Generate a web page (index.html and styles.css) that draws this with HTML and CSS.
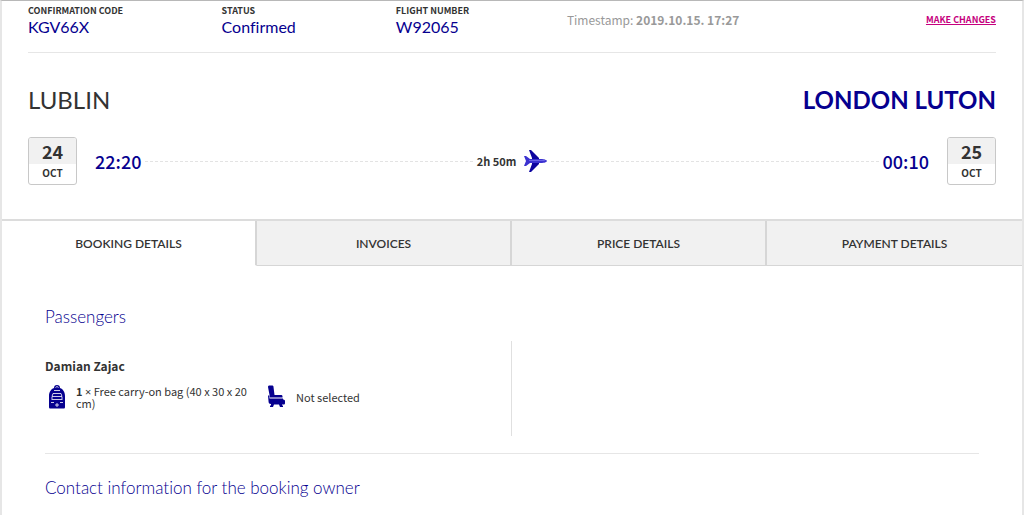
FILE: index.html
```
<!DOCTYPE html>
<html lang="en">
<head>
<meta charset="utf-8">
<title>Booking KGV66X</title>
<link rel="stylesheet" href="styles.css">
</head>
<body>
<main class="sheet">
  <section class="flight">
    <header class="summary">
      <div class="fact"><span class="fact-label">Confirmation code</span><span class="fact-value">KGV66X</span></div>
      <div class="fact"><span class="fact-label">Status</span><span class="fact-value">Confirmed</span></div>
      <div class="fact"><span class="fact-label">Flight number</span><span class="fact-value">W92065</span></div>
      <div class="stamp">Timestamp: <strong>2019.10.15. 17:27</strong></div>
      <a class="change" href="#">MAKE CHANGES</a>
    </header>
    <div class="cities">
      <span class="origin">LUBLIN</span>
      <span class="destination">LONDON LUTON</span>
    </div>
    <div class="route">
      <div class="date"><span class="day">24</span><span class="month">OCT</span></div>
      <span class="time">22:20</span>
      <span class="track"></span>
      <span class="duration">2h 50m</span>
      <svg class="plane" viewBox="0 0 23 24" aria-hidden="true">
        <path fill="#0d04a0" d="M5 1h2l8 8v6l-8 8H5l3-8V9z"/>
        <path fill="#3b32d0" d="M0 7h2l4 3h11c3 0 6 1 6 2s-3 2-6 2H6l-4 3H0l2-5z"/>
        <path fill="#6a63e8" d="M5 11h15l2 1H5z"/>
      </svg>
      <span class="track"></span>
      <span class="time">00:10</span>
      <div class="date"><span class="day">25</span><span class="month">OCT</span></div>
    </div>
  </section>

  <nav class="tabs">
    <button class="tab active" type="button">BOOKING DETAILS</button>
    <button class="tab" type="button">INVOICES</button>
    <button class="tab" type="button">PRICE DETAILS</button>
    <button class="tab" type="button">PAYMENT DETAILS</button>
  </nav>

  <section class="details">
    <h2 class="title">Passengers</h2>
    <div class="passengers">
      <article class="passenger">
        <h3 class="name">Damian Zajac</h3>
        <div class="extras">
          <div class="extra bag">
            <svg class="icon" viewBox="0 0 24 24" aria-hidden="true">
              <path fill="#06008f" d="M9 3c0-2 1-3 3-3s3 1 3 3c3 1 5 4 5 8v11c0 1-.5 1.500-1.500 1.500h-13C4.500 23.500 4 23 4 22V11c0-4 2-7 5-8z"/>
              <path fill="none" stroke="#fff" stroke-width=".8" d="M10.500 2.500c0-1 3-1 3 0M9 5.500h6M8 8.500h8l1 3H7zM6.500 14.500h11M6 17.500h3M15 17.500h3M7 12v2M17 12v2M12 18v4M10 20h4"/>
            </svg>
            <p class="extra-text"><strong>1</strong> <span class="times">×</span> Free carry-on bag (40 x 30 x 20 cm)</p>
          </div>
          <div class="extra seat">
            <svg class="icon" viewBox="0 0 24 24" aria-hidden="true">
              <path fill="#06008f" d="M4 2c0-1 .5-1.500 1.500-1.500H8c1 0 1.500.5 1.500 1.500l1 8H17c1 0 1.500.5 1.500 1.500v1H6z"/>
              <path fill="#06008f" d="M4 10.500h1.500v3H19v1c1 0 2 .5 2 1.500v2c0 1-.5 1.500-1.500 1.500H18v1h1v1.500h-3l-1-2.500h-5l-1 2.500H6v-1.500h1v-1.500C5 19 4.500 18 4.500 16z"/>
            </svg>
            <p class="extra-text">Not selected</p>
          </div>
        </div>
      </article>
    </div>
    <h2 class="title contact">Contact information for the booking owner</h2>
  </section>
</main>
</body>
</html>
```

FILE: styles.css
```
* { box-sizing: border-box; }

body {
  margin: 0;
  background: #fff;
  color: #333;
  font: 12px/12px "Noto Sans CJK SC", "Noto Sans", sans-serif;
  font-variant-ligatures: none;
}

.sheet {
  min-height: 100vh;
  border: 2px solid #e6e6e6;
  border-width: 1px 2px 0;
  border-top-color: #b8b8b8;
}

.flight { padding: 0 26px 34px; }

.summary {
  display: grid;
  grid-template-columns: 20% 18% 171fr 319fr 110fr;
  height: 52px;
  border-bottom: 1px solid #e6e6e6;
}

.fact {
  display: flex;
  flex-direction: column;
  padding-top: 4px;
}

.fact-label {
  font-size: 9px;
  font-weight: 700;
  text-transform: uppercase;
}

.fact-value {
  color: #06008f;
  font-family: Lato, sans-serif;
  font-size: 16px;
  line-height: 20px;
}

.stamp {
  padding-top: 9px;
  color: #999;
  font-size: 12px;
  line-height: 20px;
}

.change {
  justify-self: end;
  padding-top: 9px;
  color: #c6007e;
  font-size: 9px;
  font-weight: 700;
  line-height: 20px;
}

.cities {
  display: flex;
  justify-content: space-between;
  padding: 32px 0 22px;
  font-family: Lato, sans-serif;
  font-size: 24px;
  line-height: 30px;
}

.destination {
  color: #06008f;
  font-weight: 700;
}

.route {
  display: flex;
  align-items: center;
}

.date {
  width: 49px;
  overflow: hidden;
  border: 1px solid #c8c8c8;
  border-radius: 3px;
  text-align: center;
  font-weight: 700;
}

.day {
  display: block;
  background: #f1f1f1;
  font-size: 18px;
  line-height: 26px;
}

.month {
  display: block;
  padding-bottom: 2px;
  font-size: 10px;
  line-height: 18px;
}

.time {
  padding: 0 18px;
  color: #06008f;
  font-size: 18px;
  font-weight: 500;
  line-height: 24px;
}

.track {
  flex: 1;
  height: 1px;
  margin: 0 4px 0 -14px;
  background: repeating-linear-gradient(90deg, #e3e3e3 0 3px, #fff 3px 5px);
}

.plane + .track { margin: 0 -14px 0 4px; }

.duration {
  padding-right: 8px;
  font-size: 11px;
  font-weight: 700;
}

.plane {
  width: 23px;
  height: 24px;
}

.tabs {
  display: grid;
  grid-template-columns: repeat(4, 1fr);
  border-top: 2px solid #dcdcdc;
}

.tab {
  height: 45px;
  padding: 2px 0 0;
  border: 0 solid #d6d6d6;
  border-width: 0 2px 1px 0;
  background: #f1f1f1;
  color: #333;
  font-family: Lato, sans-serif;
  font-size: 12px;
  font-weight: 600;
  line-height: 16px;
}

.tab.active {
  border-bottom-color: #fff;
  background: #fff;
}

.tab:last-child { border-right: 0; }

.details { padding: 41px 43px 0; }

.title {
  margin: 0;
  color: #06008f;
  font-family: Lato, sans-serif;
  font-size: 17px;
  font-weight: 300;
  line-height: 20px;
}

.passengers {
  display: grid;
  grid-template-columns: 1fr 1fr;
  padding: 14px 0 17px;
  border-bottom: 1px solid #e6e6e6;
}

.passenger {
  min-height: 95px;
  padding-top: 15px;
  border-right: 1px solid #e0e0e0;
}

.name {
  margin: 0;
  font-size: 12px;
  line-height: 20px;
}

.extras {
  display: flex;
  padding-top: 9px;
}

.extra {
  display: flex;
  align-items: center;
  gap: 7px;
}

.bag { width: 219px; }

.seat { gap: 8px; }

.icon {
  flex: none;
  width: 24px;
  height: 24px;
}

.extra-text {
  max-width: 176px;
  margin: 0;
  font-size: 11px;
}

.times {
  font-family: "Open Sans", sans-serif;
  line-height: 0;
}

.contact { padding: 24px 0; }
```
